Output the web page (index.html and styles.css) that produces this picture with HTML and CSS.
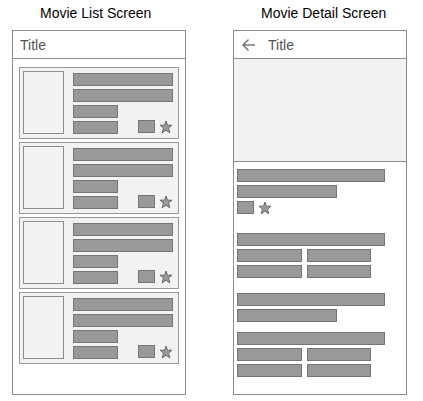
FILE: index.html
```html
<!DOCTYPE html>
<html lang="en">
<head>
<meta charset="utf-8">
<title>Movie screens</title>
<link rel="stylesheet" href="styles.css">
</head>
<body>
<svg class="defs" aria-hidden="true">
  <symbol id="star" viewBox="0 0 14 14">
    <path d="M7 1 8.5 5.2H13L9.5 8.1 10.9 12.9 7 10.2 3.1 12.9 4.5 8.1 1 5.2H5.5Z"/>
  </symbol>
</svg>
<main class="board">
  <section class="screen">
    <h2 class="caption">Movie List Screen</h2>
    <div class="phone">
      <header class="bar"><h3 class="title">Title</h3></header>
      <div class="list">
        <article class="card">
          <div class="poster"></div>
          <div class="details">
            <div class="line"></div>
            <div class="line"></div>
            <div class="line short"></div>
            <div class="row"><div class="line short"></div><div class="rating"><div class="chip"></div><svg class="star"><use href="#star"/></svg></div></div>
          </div>
        </article>
        <article class="card">
          <div class="poster"></div>
          <div class="details">
            <div class="line"></div>
            <div class="line"></div>
            <div class="line short"></div>
            <div class="row"><div class="line short"></div><div class="rating"><div class="chip"></div><svg class="star"><use href="#star"/></svg></div></div>
          </div>
        </article>
        <article class="card">
          <div class="poster"></div>
          <div class="details">
            <div class="line"></div>
            <div class="line"></div>
            <div class="line short"></div>
            <div class="row"><div class="line short"></div><div class="rating"><div class="chip"></div><svg class="star"><use href="#star"/></svg></div></div>
          </div>
        </article>
        <article class="card">
          <div class="poster"></div>
          <div class="details">
            <div class="line"></div>
            <div class="line"></div>
            <div class="line short"></div>
            <div class="row"><div class="line short"></div><div class="rating"><div class="chip"></div><svg class="star"><use href="#star"/></svg></div></div>
          </div>
        </article>
      </div>
    </div>
  </section>
  <section class="screen">
    <h2 class="caption">Movie Detail Screen</h2>
    <div class="phone">
      <header class="bar">
        <button class="back" type="button" aria-label="Back">
          <svg class="arrow" viewBox="0 0 14 14"><path d="M14 7H2M7.5 1.5 2 7 7.5 12.5"/></svg>
        </button>
        <h3 class="title">Title</h3>
      </header>
      <div class="hero"></div>
      <div class="info">
        <div class="group summary">
          <div class="line wide"></div>
          <div class="line medium"></div>
          <div class="rating"><div class="chip"></div><svg class="star"><use href="#star"/></svg></div>
        </div>
        <div class="group facts">
          <div class="line wide"></div>
          <div class="pair"><div class="line"></div><div class="line"></div></div>
          <div class="pair"><div class="line"></div><div class="line"></div></div>
        </div>
        <div class="group synopsis">
          <div class="line wide"></div>
          <div class="line medium"></div>
        </div>
        <div class="group">
          <div class="line wide"></div>
          <div class="pair"><div class="line"></div><div class="line"></div></div>
          <div class="pair"><div class="line"></div><div class="line"></div></div>
        </div>
      </div>
    </div>
  </section>
</main>
</body>
</html>
```
FILE: styles.css
```css
* {
  box-sizing: border-box;
}

body {
  margin: 0;
  background: #fff;
  font-family: "Liberation Sans", Arial, sans-serif;
}

.defs {
  display: none;
}

.board {
  display: grid;
  grid-template-columns: 1fr 1fr;
  gap: 47px;
  padding: 5px 16px 7px 12px;
}

.screen {
  display: flex;
  flex-direction: column;
}

.caption {
  margin: 0 0 9px;
  padding-left: 28px;
  color: #000;
  font-size: 14px;
  font-weight: 400;
  line-height: 16px;
  white-space: nowrap;
}

.phone {
  flex: 1;
  border: 1px solid #8c8c8c;
}

.bar {
  display: flex;
  align-items: center;
  height: 28px;
  padding: 0 7px;
  border-bottom: 1px solid #8c8c8c;
}

.title {
  margin: 0;
  color: #555;
  font-size: 14px;
  font-weight: 400;
  line-height: 16px;
}

.back {
  display: flex;
  margin: 0 13px 0 0;
  padding: 0;
  border: 0;
  background: none;
}

.arrow {
  width: 14px;
  height: 14px;
  fill: none;
  stroke: #777;
  stroke-width: 1.5;
}

.list {
  display: flex;
  flex-direction: column;
  gap: 3px;
  padding: 8px 6px;
}

.card {
  display: flex;
  gap: 9px;
  padding: 3px 5px 3px 3px;
  border: 1px solid #999;
  background: #f2f2f2;
}

.poster {
  width: 41px;
  height: 63px;
  border: 1px solid #8c8c8c;
}

.details {
  display: flex;
  flex: 1;
  flex-direction: column;
  gap: 3px;
  padding: 2px 0 1px;
}

.line,
.chip {
  height: 13px;
  border: 1px solid #757575;
  background: #999;
}

.short {
  width: 45%;
}

.wide {
  width: 89%;
}

.medium {
  width: 60%;
}

.row {
  display: flex;
  justify-content: space-between;
  height: 13px;
}

.row .rating {
  margin-top: -1px;
}

.rating {
  display: flex;
  gap: 4px;
}

.chip {
  width: 17px;
}

.star {
  width: 14px;
  height: 14px;
  fill: #999;
  stroke: #6b6b6b;
}

.hero {
  height: 103px;
  border-bottom: 1px solid #8c8c8c;
  background: #f2f2f2;
}

.info {
  padding: 7px 3px 17px;
}

.group {
  display: flex;
  flex-direction: column;
  gap: 3px;
}

.summary {
  margin-bottom: 18px;
}

.facts {
  margin-bottom: 15px;
}

.synopsis {
  margin-bottom: 10px;
}

.pair {
  display: grid;
  grid-template-columns: 1fr 1fr;
  gap: 5px;
  width: 81%;
}
```
